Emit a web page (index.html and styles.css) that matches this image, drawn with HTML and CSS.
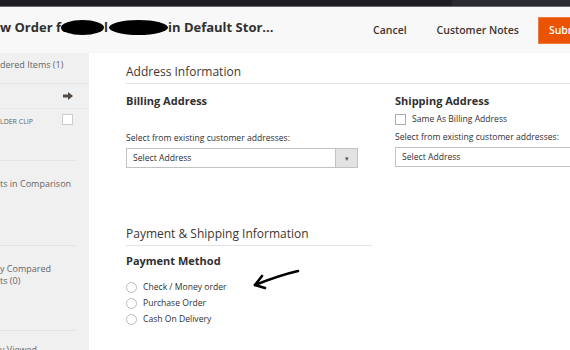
FILE: index.html
```html
<!DOCTYPE html>
<html lang="en">
<head>
    <meta charset="UTF-8">
    <meta name="viewport" content="width=device-width, initial-scale=1.0">
    <title>New Order</title>
    <link rel="stylesheet" href="styles.css">
</head>
<body>
    <div class="topbar"><div class="topbar-right"></div></div>

    <header class="page-header">
        <h1 class="page-title">w Order fo<span class="blot blot-1"></span>l<span class="blot blot-2"></span>in Default Stor...</h1>
        <div class="page-actions">
            <button class="action-link">Cancel</button>
            <button class="action-link notes">Customer Notes</button>
            <button class="action-primary">Subr</button>
        </div>
    </header>

    <div class="page-main">
        <aside class="sidebar">
            <div class="side-block side-title">dered Items (1)</div>
            <div class="side-row arrow-row">
                <svg width="10" height="8" viewBox="0 0 10 8"><path d="M0 2.5h5V0l5 4-5 4V5.5H0z" fill="#514943"/></svg>
            </div>
            <div class="side-row item-row">
                <span class="item-name">LDER CLIP</span>
                <span class="side-check"></span>
            </div>
            <div class="side-block compare">ts in Comparison</div>
            <div class="side-block recent">y Compared<br>ts (0)</div>
            <div class="side-block viewed">y Viewed</div>
        </aside>

        <main class="content">
            <section class="section">
                <h2 class="section-title">Address Information</h2>
                <div class="columns">
                    <div class="col">
                        <h3 class="col-title">Billing Address</h3>
                        <div class="spacer"></div>
                        <label class="field-label">Select from existing customer addresses:</label>
                        <div class="select">
                            <span>Select Address</span>
                            <span class="select-arrow">▾</span>
                        </div>
                    </div>
                    <div class="col">
                        <h3 class="col-title">Shipping Address</h3>
                        <label class="check-line"><span class="checkbox"></span>Same As Billing Address</label>
                        <label class="field-label">Select from existing customer addresses:</label>
                        <div class="select open-end">
                            <span>Select Address</span>
                        </div>
                    </div>
                </div>
            </section>

            <section class="section payment">
                <h2 class="section-title half">Payment &amp; Shipping Information</h2>
                <h3 class="col-title">Payment Method</h3>
                <ul class="methods">
                    <li><span class="radio"></span>Check / Money order</li>
                    <li><span class="radio"></span>Purchase Order</li>
                    <li><span class="radio"></span>Cash On Delivery</li>
                </ul>
            </section>

            <svg class="scribble" width="60" height="30" viewBox="0 0 60 30">
                <path d="M58 6 C45 9 30 14 15 20" fill="none" stroke="#000" stroke-width="2.6" stroke-linecap="round"/>
                <path d="M22 11 L15 20 L25 23" fill="none" stroke="#000" stroke-width="2.6" stroke-linecap="round" stroke-linejoin="round"/>
            </svg>
        </main>
    </div>
</body>
</html>
```

FILE: styles.css
```css
body {
    margin: 0;
    width: 570px;
    height: 350px;
    overflow: hidden;
    font-family: "Open Sans", "Noto Sans", sans-serif;
    color: #303030;
    background: #ffffff;
}
.topbar {
    height: 6px;
    background: #1f1e24;
    border-bottom: 1px solid #6b6b6b;
    display: flex;
    justify-content: flex-end;
}
.topbar-right {
    width: 118px;
    background: #2b2a31;
}
.page-header {
    height: 46px;
    background: #f8f8f8;
    display: flex;
    align-items: center;
    white-space: nowrap;
}
.page-title {
    flex: 0 0 373px;
    margin: -6px 0 0 0;
    font-size: 13px;
    font-weight: 700;
    color: #303030;
}
.blot {
    display: inline-block;
    height: 15px;
    background: #000;
    border-radius: 50%;
    vertical-align: -3px;
}
.blot-1 { width: 43px; margin-left: -8px; }
.blot-2 { width: 59px; margin-left: 1px; margin-right: 0; }
.page-actions {
    display: flex;
    align-items: center;
}
button {
    font-family: inherit;
    font-weight: 600;
    font-size: 10.5px;
    border: 0;
    background: none;
    color: #41362f;
    padding: 0;
}
.notes { margin-left: 30px; }
.action-primary {
    margin-left: 19px;
    height: 27px;
    width: 50px;
    padding: 0 0 0 10px;
    text-align: left;
    background: #eb5202;
    color: #fff;
    border: 1px solid #f07a3e;
    border-right: 0;
}
.page-main {
    display: flex;
    height: 297px;
}
.sidebar {
    flex: 0 0 89px;
    background: #f0f0f0;
    font-size: 9px;
    color: #666;
    white-space: nowrap;
    overflow: hidden;
}
.side-block {
    border-bottom: 1px solid #e4e4e4;
    margin-right: 13px;
}
.side-title {
    height: 30px;
    line-height: 24px;
    margin-right: 0;
}
.side-row {
    display: flex;
    justify-content: flex-end;
    align-items: center;
    padding-right: 16px;
}
.arrow-row {
    height: 24px;
    border-bottom: 1px solid #e9e9e9;
}
.item-row {
    height: 52px;
    align-items: flex-start;
    justify-content: space-between;
    padding-top: 5px;
    box-sizing: border-box;
    margin-right: 13px;
    padding-right: 3px;
    border-bottom: 1px solid #e4e4e4;
}
.item-name {
    font-size: 7px;
    text-transform: uppercase;
    padding-top: 3px;
}
.side-check {
    width: 9px;
    height: 9px;
    background: #fff;
    border: 1px solid #ccc;
}
.compare {
    height: 85px;
    padding-top: 16px;
    box-sizing: border-box;
}
.recent {
    height: 85px;
    padding-top: 17px;
    box-sizing: border-box;
    line-height: 12px;
}
.viewed {
    border: 0;
    padding-top: 12px;
}
.content {
    flex: 1;
    padding-left: 37px;
    position: relative;
    overflow: hidden;
}
.section-title {
    margin: 10px 0 0 0;
    font-size: 12px;
    font-weight: 400;
    color: #41362f;
    padding-bottom: 3px;
    border-bottom: 1px solid #e3e3e3;
}
.section-title.half {
    width: 246px;
}
.columns {
    display: flex;
    gap: 37px;
}
.col {
    flex: 0 0 232px;
}
.col-title {
    margin: 9px 0 0 0;
    font-size: 11px;
    font-weight: 700;
    color: #303030;
}
.spacer {
    height: 18px;
}
.field-label {
    display: block;
    font-size: 8.6px;
    color: #303030;
    margin-top: 6px;
}
.check-line {
    display: flex;
    align-items: center;
    font-size: 8.6px;
    margin-top: 5px;
}
.checkbox {
    width: 9px;
    height: 9px;
    border: 1px solid #adadad;
    background: #fff;
    margin-right: 6px;
}
.col .check-line + .field-label {
    margin-top: 6px;
}
.select {
    margin-top: 4px;
    height: 18px;
    border: 1px solid #c2c2c2;
    display: flex;
    align-items: center;
    justify-content: space-between;
    font-size: 8.6px;
    padding-left: 6px;
}
.select.open-end {
    width: 240px;
}
.select-arrow {
    width: 21px;
    height: 18px;
    background: #e3e3e3;
    border-left: 1px solid #c2c2c2;
    font-size: 7px;
    color: #555;
    display: flex;
    align-items: center;
    justify-content: center;
}
.payment {
    margin-top: 57px;
}
.payment .col-title {
    margin-top: 7px;
}
.methods {
    list-style: none;
    margin: 11px 0 0 0;
    padding: 0;
    font-size: 8.6px;
}
.methods li {
    display: flex;
    align-items: center;
    height: 16px;
}
.radio {
    width: 9px;
    height: 9px;
    border: 1px solid #bdbdbd;
    border-radius: 50%;
    margin-right: 6px;
    background: #fff;
}
.scribble {
    position: absolute;
    left: 151px;
    top: 212px;
}
```
